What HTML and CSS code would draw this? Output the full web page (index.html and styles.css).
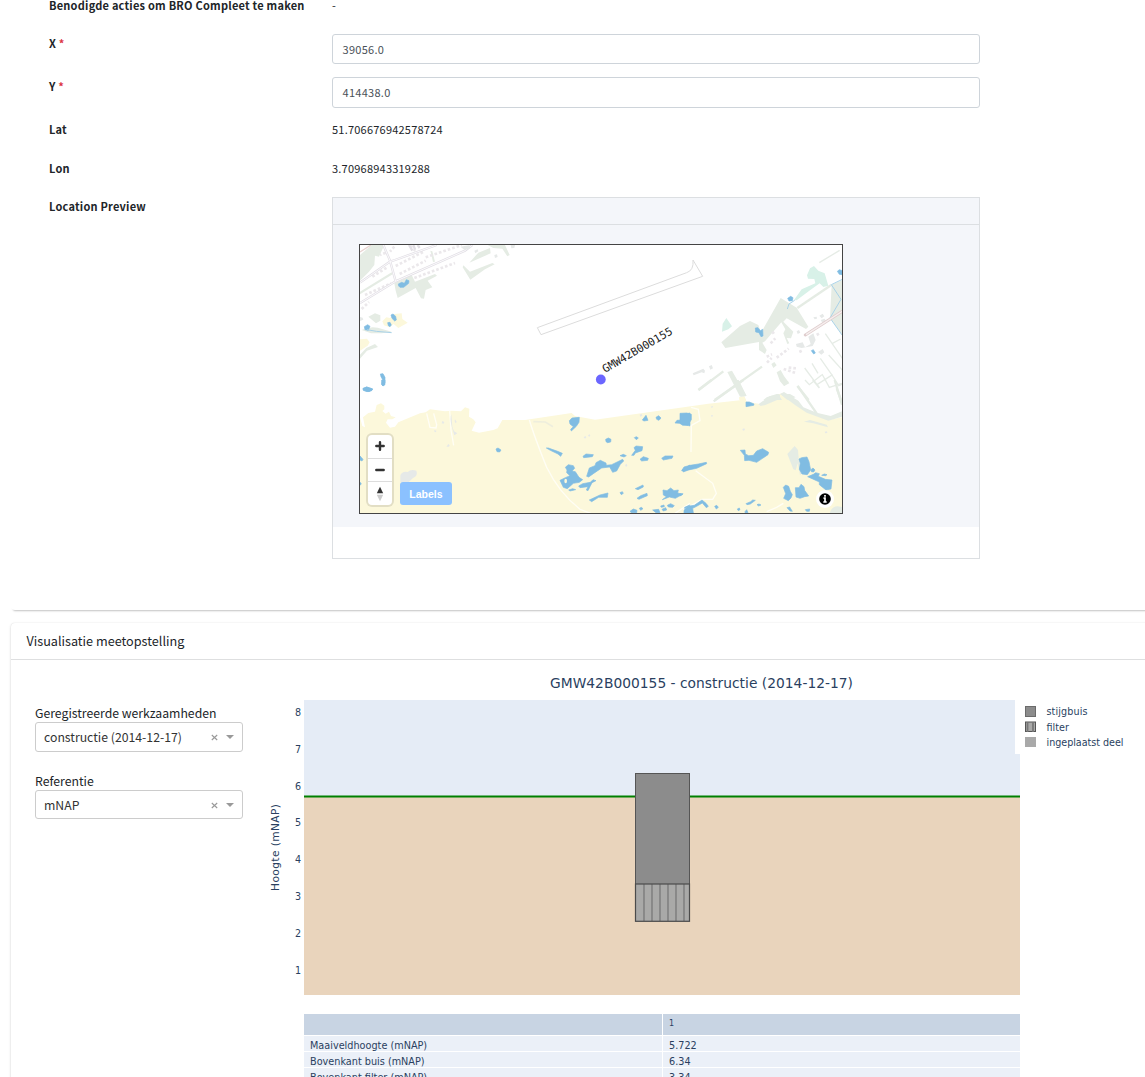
FILE: index.html
```html
<!DOCTYPE html>
<html lang="nl">
<head>
<meta charset="utf-8">
<title>GMW42B000155</title>
<link rel="stylesheet" href="styles.css">
</head>
<body>
<main class="page">
<section class="card form-card">
  <div class="row row-actions"><div class="label"><span class="t-actions">Benodigde acties om BRO Compleet te maken</span></div><div class="value">-</div></div>
  <div class="row row-x"><div class="label">X <span class="req">*</span></div><div class="input">39056.0</div></div>
  <div class="row row-y"><div class="label">Y <span class="req">*</span></div><div class="input">414438.0</div></div>
  <div class="row row-lat"><div class="label">Lat</div><div class="value">51.706676942578724</div></div>
  <div class="row row-lon"><div class="label">Lon</div><div class="value">3.70968943319288</div></div>
  <div class="row row-map"><div class="label">Location Preview</div>
    <div class="preview">
      <div class="preview-head"></div>
      <div class="preview-body">
        <div class="map">
          <svg class="map-art" viewBox="360 245 482 268" width="482" height="268">
            <!-- dunes -->
            <g transform="translate(355 380) scale(.33333)">
              <path class="sand" d="M15 400V112L22 138 30 142 24 112 40 99 60 95 65 75 78 70 88 77 88 88 82 93 92 101 102 95 108 108 122 112 112 118 98 118 93 128 105 143 120 140 130 127 195 100 212 97 225 88 270 94 290 92 318 94 330 82 343 86 342 110 355 118 362 127 350 152 372 158 415 150 428 145 442 120 510 120 650 99 660 108 720 119 970 84 1060 71 1155 61 1155 50 1168 50 1175 65 1215 72 1275 42 1285 38 1325 70 1360 95 1420 120 1461 112V400Z"/>
              <path class="trail" d="M215 100L225 142 243 144 245 134 236 100M284 92L288 150 296 196"/>
              <path class="grey" d="M289 103C282 120 292 145 298 166L307 160 297 154 292 140ZM300 118l5 8-3 4-3-6zM262 123l6 3-2 5-6-1zM238 150l6 2-1 5-5-2zM274 200l6-8 4 4-2 4zM136 286Q142 272 158 276 168 266 184 272 190 288 174 294L160 307H136Z"/>
              <path class="water" d="M24 25L35 21 53 27 50 31 42 35 26 31ZM80 0H90V14L84 18 80 12ZM423 207L429 204 438 210 434 216 426 215ZM15 228L24 238 21 243 15 240ZM15 307l4 4-4 5z"/>
            </g>
            <!-- village in the north-west -->
            <g transform="translate(355 240) scale(.33333)">
              <path class="park" d="M15 45L50 15H88L72 50 60 47 58 75 42 95 15 122ZM232 34L240 65 234 66 226 32ZM118 130L170 105 180 125 240 102 246 107 218 122 232 142 212 150 207 176 198 175 182 144 128 174 122 152ZM325 76L345 95 412 69 419 73 390 88 346 119 323 82ZM343 68L370 38 405 24 407 40ZM398 15H450L464 45 457 49 442 26 415 24ZM40 230L60 220 76 226 76 242 63 250ZM20 270Q50 255 84 268L110 275 80 280 48 280ZM15 344L34 324 60 312 69 321 36 332 15 356ZM15 155L110 97 113 103 15 163Z"/>
              <path class="houses" d="M52 110L95 83M30 165L108 130M122 78L206 35M134 102L212 62M178 114L300 69M20 207L42 186M118 20L105 35M166 18L181 32M92 38L75 45M212 52L320 15"/>
              <path class="road" d="M15 128L105 65 120 60 245 15M15 189L122 124 330 32 352 15M85 15L105 62 122 124M162 15L172 32M175 15L180 28M188 15L194 24"/>
              <path class="road-core" d="M15 128L105 65 120 60 245 15M15 189L122 124 330 32 352 15M85 15L105 62 122 124"/>
              <path class="highway" d="M15 36L48 15"/>
              <path class="grey" d="M316 20L342 16 348 23 330 31ZM358 32l10-4 2 6-9 6zM418 45l8-2 2 8-8 3zM467 15h13l-2 9-9 1zM15 231l8 2 2 6-10 4z"/>
              <path class="sand" d="M82 244L94 232 105 234 118 222 140 220 142 237 158 248 130 264 116 252 104 262 87 256ZM15 298L36 296 44 307 38 317 15 332Z"/>
              <path class="water" d="M130 132L140 127 148 130 154 119 162 122 161 130 146 142 135 142 131 138ZM108 225L114 222 122 229 124 240 119 243 111 235ZM98 248l7-1 4 8-4 5-5-3zM28 260L38 254 45 259 40 271 30 269ZM76 402L84 401 90 412 90 428 84 438 80 434 83 419 78 410ZM24 446L35 441 53 447 50 452 36 455 25 451Z"/>
              <path class="stream" d="M36 269L64 274 110 278"/>
            </g>
            <!-- runway outline -->
            <g transform="translate(520 240) scale(.33333)">
              <path class="outline" d="M52 263L500 98Q522 91 519 60L548 109 63 284Z"/>
            </g>
            <!-- farmland in the north-east -->
            <g transform="translate(690 240) scale(.33333)">
              <path class="park" d="M94 307L150 258 180 243 205 255 213 278 272 174 320 203 355 260 348 267 290 235 280 245 310 275 303 295 290 294 298 310 292 312 280 280 286 268 274 247 225 304 217 308 230 330 225 342 207 330 207 306 106 324ZM425 134L457 120V284L420 235ZM112 396L126 392 168 466 150 470ZM260 397L272 390 282 408 298 430 282 438 270 424ZM244 372L253 366 260 376 250 384ZM230 472L260 462 300 462 317 472 290 480H220Z"/>
              <path class="field" d="M322 204L425 134"/>
              <path class="field" d="M26 450L100 394M74 480L216 380M322 438L356 480M440 445L453 480"/>
              <path class="ditch" d="M344 384L388 443M366 370L384 400M382 433L428 404M391 355L424 402 446 437 457 432M416 345L457 390M406 281L457 355M426 311L452 297M388 68L449 31"/>
              <path class="mint" d="M96 275L98 251 109 234 126 259 115 268ZM351 106L360 85 372 78 385 92 404 100 415 137 400 141 389 130 360 151 320 181 312 180 335 148 376 130 373 117 354 116Z"/>
              <path class="grey" d="M8 400L40 386 45 392 43 400 35 397 11 406ZM57 379l8-4 4 10-8 4zM318 312L338 307 345 322 362 312 355 290 370 280 377 300 368 318 335 324 320 320ZM384 336L398 327 403 337 394 344ZM388 227l10-6 5 8-8 6zM370 232l10-2 1 6-7 2zM392 240l12-4 4 8-11 4zM320 274l7-4 4 8-8 4z"/>
              <path class="farms" d="M242 310L256 295M246 280L254 275M230 350L246 343M231 368L245 354M260 353L296 326M281 387L320 400M296 383L320 385M328 336L340 330M380 285L392 278"/>
              <path class="stream" d="M314 181L297 192 292 207M457 118L424 134 453 178 420 234 457 286"/>
              <path class="highway-case" d="M346 285L457 214"/><path class="highway-fill" d="M348 284L457 214"/>
              <path class="water" d="M293 175L302 169 309 173 307 182 297 183ZM442 94L448 89 457 92V104L448 103ZM196 264L204 263 211 272 218 268 219 288 213 290 207 278 197 276ZM364 332L370 329 376 339 371 342Z"/>
              <path class="sand" d="M147 472L163 468 168 480H148ZM266 464L272 462 292 480H276Z"/>
            </g>
            <!-- lakes, middle -->
            <g transform="translate(520 380) scale(.33333)">
              <path class="trail" d="M28 120Q43 170 80 262 118 340 180 388L212 400M465 400L510 370"/>
              <path class="grey-line" d="M40 125L76 126 99 140"/>
              <path class="grey" d="M191 172l5-4 3 4-4 4zM204 166l5-3 2 5-4 2zM359 104l6-3 2 6-6 3zM315 255l5-4 2 6-4 4z"/>
              <path class="water" d="M148 122L156 114 178 112 177 127 169 139 154 153 152 148 160 140 150 132ZM257 178L265 174 273 178 272 186 263 188 258 185ZM343 173l6-3 6 4-6 5zM367 120L378 106 384 121 372 123ZM408 112L416 107 423 114 417 121 410 118ZM465 129L471 121 485 120 496 102 510 99V138L478 130ZM79 204L85 204 113 214 127 220 122 229 114 222 91 211ZM189 229L198 222 220 224 217 230 191 233ZM300 227l10-4 9 4-7 4zM335 226L346 211 342 203 348 198 368 200 366 212 346 219 342 226ZM360 238L370 230 385 235 383 241 365 243ZM425 235L435 228 459 228 456 235 430 240ZM200 289L208 264 225 257 228 248 241 241 258 249 259 256 275 254 308 238 311 243 301 253 290 273 278 277 269 261 245 264 220 281 206 291ZM120 301L136 293 150 287 140 278 141 270 136 262 145 254 160 257 164 265 156 273 166 275 177 292 188 299 178 307 160 310 142 326 130 322ZM176 318L188 311 211 307 219 299 228 302 216 308 210 320 204 332 199 330 204 320 180 323ZM146 330l12-4 9 3-17 4zM208 360L240 345 264 339 262 352 236 352 215 365ZM300 338l7-3 3 5-6 4zM346 326L369 315 370 321 354 329ZM351 355L362 347 381 340 382 347 357 358ZM427 359L439 350 430 345 429 330 441 332 452 324 462 332 475 330 473 339 488 343 466 355 448 351ZM486 270L510 255V268L490 276ZM330 394L340 387 351 391 350 398H334ZM358 385l6-3 5 4-7 5zM398 390L416 388 420 398H408ZM422 378l10-3 1 5-9 2zM442 376L452 371 463 377 458 382 445 381ZM426 388l11-5 3 7-10 3zM494 382L510 375V400H492Z"/>
              <ellipse cx="137" cy="303" rx="4" ry="7" class="sand"/>
            </g>
            <!-- lakes, east -->
            <g transform="translate(680 380) scale(.33333)">
              <path class="trail" d="M33 82L55 88 60 122 34 136 33 216M47 272L98 310 109 340 98 358 66 358 10 390M260 395L290 382 310 370"/>
              <path class="park" d="M235 73L270 48 300 44 300 56 256 75 242 78ZM300 42L312 36 355 62 370 82 410 98 452 108 486 94V110L445 122 380 98 345 75 330 64ZM158 0H176L200 48 184 50ZM302 0H318L326 6 313 18ZM372 125L390 120 440 134 444 142 400 130Z"/>
              <path class="field" d="M101 64L190 0M55 30L94 0M353 18L410 100M464 0L486 74"/>
              <path class="ditch" d="M375 0L388 14 425 -15M398 0L418 24M426 -18L448 22 486 10"/>
              <path class="park" d="M322 222L344 198 354 210 356 236 364 252 372 275 360 285 353 250 347 271 340 268ZM450 397Q455 380 473 379L486 381V400H450Z"/>
              <path class="grey" d="M93 80l5-2 1 4-5 1zM93 106l5-1 1 4-5 1zM187 147l6-2 2 5-6 2zM434 155l7-1 1 5-6 1z"/>
              <path class="water" d="M0 119L0 100 20 99 34 103 34 119 23 136 8 136 0 130ZM198 66L208 66 222 72 221 76 198 80ZM181 211L195 210 196 222 206 227 220 226 230 213 248 206 266 217 264 224 230 247 207 241 194 242 193 226ZM5 272L12 261 30 256 55 252 79 247 80 251 50 265 30 269ZM357 237L365 233 381 231 387 245 392 270 382 284 366 282 358 268 361 250ZM393 269l6-5 6 6-4 6-7-1zM383 290L400 283 407 278 418 281 415 289 436 298 456 300 453 327 438 330 418 314 418 306ZM425 286L433 282 441 284 437 287ZM310 322L317 315 326 319 331 334 337 344 333 354 325 362 311 355 317 341ZM346 323L357 323 363 313 372 320 374 331 386 348 374 350 360 355 348 351ZM13 390L22 379 43 376 66 360 78 370 85 379 79 383 67 369 50 379 38 385 40 399H13ZM104 379l6-3 5 6-6 5zM198 371L212 365 218 360 226 361 211 372 201 374ZM231 374l6-2 6 3-7 3zM172 387l6-3 2 5-5 3zM195 395l5-6 4 9h-9zM321 383L329 381 337 394 330 393ZM376 389L389 387 388 394 380 394ZM0 341l9 0-6 6-3 0z"/>
            </g>
            <circle cx="600.8" cy="379.5" r="4.9" fill="#6b66ff"/>
            <text class="well-name" x="605" y="373" transform="rotate(-30 605 373)" textLength="79">GMW42B000155</text>
          </svg>
          <div class="zoomer">
            <div class="zbtn"><svg width="10" height="10" viewBox="0 0 10 10"><path d="M5 1.3V8.7M1.3 5H8.7" stroke="#333" stroke-width="2.4" stroke-linecap="round"/></svg></div>
            <div class="zbtn"><svg width="10" height="10" viewBox="0 0 10 10"><path d="M1.3 5H8.7" stroke="#333" stroke-width="2.4" stroke-linecap="round"/></svg></div>
            <div class="zbtn"><svg width="8" height="16" viewBox="0 0 8 16"><path d="M4 .8L7.2 7.2H.8Z" fill="#333"/><path d="M.8 8.8H7.2L4 15.2Z" fill="#ccc"/></svg></div>
          </div>
          <div class="labels-btn">Labels</div>
          <svg class="info" width="18" height="18" viewBox="0 0 18 18"><circle cx="9" cy="9" r="9" fill="#fff"/><circle cx="9" cy="9" r="5.8"/><path d="M9 5.1V6.7M7.5 8.2H9V11.9M7.3 12H10.7" stroke="#fff" stroke-width="1.7" fill="none"/></svg>
        </div>
      </div>
      <div class="preview-foot"></div>
    </div>
  </div>
</section>

<section class="card vis-card">
  <h2 class="card-title"><span>Visualisatie meetopstelling</span></h2>
  <div class="vis-body">
    <div class="controls">
      <div class="ctl-label">Geregistreerde werkzaamheden</div>
      <div class="select select-a"><span class="chosen">constructie (2014-12-17)</span><svg class="clear" width="7" height="7" viewBox="0 0 7 7"><path d="M.8 1L6.2 6M6.2 1L.8 6" stroke="#999" stroke-width="1.1"/></svg><span class="arrow"></span></div>
      <div class="ctl-label second">Referentie</div>
      <div class="select select-b"><span class="chosen">mNAP</span><svg class="clear" width="7" height="7" viewBox="0 0 7 7"><path d="M.8 1L6.2 6M6.2 1L.8 6" stroke="#999" stroke-width="1.1"/></svg><span class="arrow"></span></div>
    </div>
    <div class="figure">
      <svg class="chart" width="885" height="354" viewBox="260 660 885 354">
        <rect x="304" y="700" width="716" height="295" fill="#e5ecf6"/>
        <rect x="304" y="797" width="716" height="198" fill="#e9d4bc"/>
        <path d="M304 796.5H1020" stroke="#008000" stroke-width="1.8"/>
        <rect x="1015" y="700" width="130" height="54" fill="#fff"/>
        <rect x="635.5" y="773.5" width="54" height="111" fill="#8c8c8c" stroke="#555"/>
        <rect x="635.5" y="884" width="54" height="37.5" fill="#a9a9a8"/>
        <path d="M644 884V921M652 884V921M660 884V921M668 884V921M676 884V921M684 884V921" stroke="#858585" stroke-width="1.8"/>
        <rect x="635.5" y="884" width="54" height="37.3" fill="none" stroke="#4b4b4b" stroke-width="1.2"/>
        <text class="ch-title" x="550" y="688" textLength="303">GMW42B000155 - constructie (2014-12-17)</text>
        <g class="ticks"><text x="301" y="716">8</text><text x="301" y="753">7</text><text x="301" y="790">6</text><text x="301" y="826">5</text><text x="301" y="863">4</text><text x="301" y="900">3</text><text x="301" y="937">2</text><text x="301" y="974">1</text></g>
        <text class="axis" x="279" y="891" transform="rotate(-90 279 891)" textLength="87">Hoogte (mNAP)</text>
        <rect x="1025.5" y="706.5" width="10" height="10" fill="#8c8c8c" stroke="#6b6b6b"/>
        <rect x="1025.5" y="722" width="10" height="9.5" fill="#a9a9a8" stroke="#555"/><path d="M1027.5 722V732M1033 722V732" stroke="#777" stroke-width="1.8"/>
        <rect x="1025" y="737" width="11" height="10" fill="#a9a9a9"/>
        <g class="legend"><text x="1046.5" y="715" textLength="41">stijgbuis</text><text x="1046.5" y="731" textLength="22.5">filter</text><text x="1046.5" y="746" textLength="77">ingeplaatst deel</text></g>
      </svg>
      <div class="table">
        <div class="th"></div><div class="th">1</div>
        <div class="td">Maaiveldhoogte (mNAP)</div><div class="td">5.722</div>
        <div class="td">Bovenkant buis (mNAP)</div><div class="td">6.34</div>
        <div class="td">Bovenkant filter (mNAP)</div><div class="td">3.34</div>
      </div>
    </div>
  </div>
</section>
</main>
</body>
</html>
```
FILE: styles.css
```css
* { box-sizing: border-box; }
body { margin: 0; background: #fff; color: #212529; font-family: "Noto Sans CJK JP", "Noto Sans", sans-serif; font-size: 11px; line-height: 16px; }
.page { height: 1077px; overflow: hidden; padding-left: 11px; }
.card { width: 1160px; background: #fff; border-radius: 4px; }
.form-card { height: 610px; padding-left: 38px; border-radius: 0 0 4px 4px; box-shadow: 0 3px 2px -2px rgba(0,0,0,.24); }
.row { display: grid; grid-template-columns: 283px 648px; align-items: start; }
.label { font-weight: 700; white-space: nowrap; letter-spacing: .23px; }
.value { letter-spacing: .22px; }
.req { color: #dc3545; }
.row-actions { height: 34px; line-height: 10px; }
.row-x { height: 43px; }
.row-y { height: 44px; }
.row-x .label, .row-y .label { padding-top: 1px; }
.input { height: 30px; border: 1px solid #ced4da; border-radius: 3px; padding: 0 9.5px; line-height: 29px; color: #495057; letter-spacing: .28px; }
.row-y .input { height: 31px; }
.row-lat { height: 39px; }
.row-lon { height: 37px; }
.row-map .label { padding-top: 1px; }
.preview { border: 1px solid #dcdfe2; height: 362px; display: flex; flex-direction: column; }
.preview-head { height: 27px; background: #f4f6fa; border-bottom: 1px solid #dcdfe2; flex: none; }
.preview-body { height: 302px; background: #f4f6fa; padding: 19px 26px; flex: none; }
.map { position: relative; width: 484px; height: 270px; border: 1px solid #444; background: #fff; overflow: hidden; }
.map-art { display: block; }
.sand { fill: #fcf8db; }
.park { fill: #e5ece4; }
.mint { fill: #d8f1e8; }
.water { fill: #80bce2; stroke: #80bce2; stroke-width: 2; stroke-linejoin: round; }
.grey { fill: #e6e9e8; }
.houses, .farms { fill: none; stroke: #ebe8eb; stroke-width: 8; stroke-dasharray: 8 6; }
.road { fill: none; stroke: #e2dfe5; stroke-width: 7; }
.road-core { fill: none; stroke: #fbfafc; stroke-width: 3; }
.highway { fill: none; stroke: #e9d3d1; stroke-width: 4; }
.highway-case { fill: none; stroke: #dfcdcd; stroke-width: 9; stroke-linecap: round; }
.highway-fill { fill: none; stroke: #f6efef; stroke-width: 4; }
.field { fill: none; stroke: #e5ece4; stroke-width: 7; }
.ditch { fill: none; stroke: #e6ece6; stroke-width: 4; }
.trail { fill: none; stroke: #fffef5; stroke-width: 4; }
.grey-line { fill: none; stroke: #eeeedd; stroke-width: 5; }
.stream { fill: none; stroke: #a9d2e8; stroke-width: 3; }
.outline { fill: none; stroke: #dcdcdc; stroke-width: 3; }
.well-name { font: 11px "DejaVu Sans Mono", monospace; fill: #222; }
.zoomer { position: absolute; left: 8px; top: 190px; width: 24px; height: 70px; background: #fff; border-radius: 4px; box-shadow: 0 0 0 2px rgba(0,0,0,.1); display: flex; flex-direction: column; }
.zbtn { flex: 1; display: flex; align-items: center; justify-content: center; padding-right: 1px; }
.zbtn + .zbtn { border-top: 1px solid #ddd; }
.labels-btn { position: absolute; left: 40px; top: 237px; width: 52px; height: 23px; border-radius: 3px; background: #8bc1ff; color: #fff; font: 700 10.5px/24px "Liberation Sans", sans-serif; text-align: center; }
.info { position: absolute; left: 455.5px; top: 244.5px; }

.vis-card { margin-top: 13px; height: 500px; box-shadow: 0 0 1px rgba(0,0,0,.13), 0 1px 3px rgba(0,0,0,.16); }
.card-title { margin: 0; height: 37px; padding-left: 15.5px; border-bottom: 1px solid #dedfe0; font-size: 12.65px; line-height: 36px; font-weight: 400; }
.vis-body { display: grid; grid-template-columns: 249px 885px; }
.controls { padding: 44px 0 0 24px; width: 232px; font-size: 12.25px; color: #212529; }
.ctl-label { height: 18px; line-height: 18px; white-space: nowrap; }
.second { margin-top: 20px; }
.select { height: 30px; border: 1px solid #ccc; border-radius: 3px; display: flex; align-items: center; padding: 0 8px; color: #333; white-space: nowrap; }
.select-b { height: 29px; }
.chosen { flex: 1; }
.clear { margin: 1px 8px 0 0; }
.arrow { border: 4.5px solid transparent; border-top-color: #999; border-bottom: 0; }
.figure { width: 885px; }
.chart { display: block; font-family: "DejaVu Sans", sans-serif; fill: #2a3f5f; }
.ch-title { font-size: 13.8px; }
.ticks { font-size: 9.6px; text-anchor: end; }
.axis { font-size: 10.6px; }
.legend { font-size: 9.6px; }
.table { margin-left: 44px; width: 716px; display: grid; grid-template-columns: 358px 357px; column-gap: 1px; row-gap: 1px; grid-template-rows: 21px 15px 15px 15px; font: 9.7px/20px "DejaVu Sans", sans-serif; color: #2a3f5f; }
.th { background: #c8d4e3; padding-left: 6px; font-size: 8px; }
.td { background: #ebf0f8; padding-left: 6px; }
```
